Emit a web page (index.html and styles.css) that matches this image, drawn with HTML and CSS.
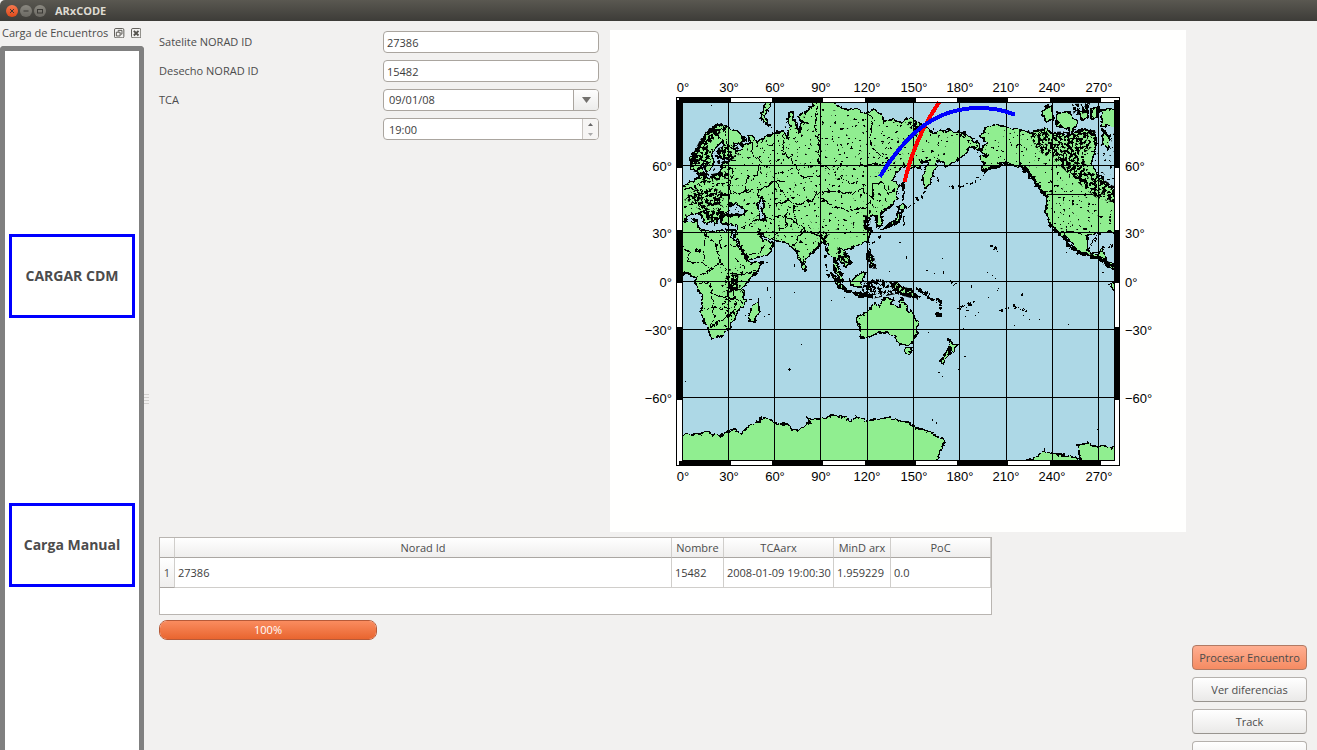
FILE: index.html
```html
<!DOCTYPE html>
<html lang="es">
<head>
<meta charset="utf-8">
<title>ARxCODE</title>
<link rel="stylesheet" href="styles.css">
</head>
<body>
<div class="window">
  <header class="titlebar">
    <button class="wm wm-close" aria-label="Cerrar"><svg viewBox="0 0 12 12"><path d="M4 4l4 4M8 4l-4 4"/></svg></button>
    <button class="wm" aria-label="Minimizar"><svg viewBox="0 0 12 12"><path d="M3.5 6h5"/></svg></button>
    <button class="wm" aria-label="Maximizar"><svg viewBox="0 0 12 12"><rect x="3.5" y="4.5" width="5" height="3.5"/></svg></button>
    <h1 class="title">ARxCODE</h1>
  </header>
  <div class="body">
    <aside class="dock">
      <div class="dock-head">
        <span class="dock-title">Carga de Encuentros</span>
        <button class="dock-btn" aria-label="Desacoplar"><svg viewBox="0 0 11 11"><rect x=".5" y=".5" width="10" height="10" rx="1.5"/><path d="M4.500 4V2.500h4v4H7M2.500 4.500h4v4h-4z"/></svg></button>
        <button class="dock-btn" aria-label="Cerrar panel"><svg viewBox="0 0 11 11"><rect x=".5" y=".5" width="10" height="10" rx="1.500"/><path class="thick" d="M3 3l5 5M8 3l-5 5"/></svg></button>
      </div>
      <div class="dock-frame">
        <button class="load">CARGAR CDM</button>
        <button class="load">Carga Manual</button>
      </div>
    </aside>
    <div class="splitter"><svg viewBox="0 0 5 10"><path d="M0 .5h5M0 3.500h5M0 6.500h5M0 9.500h5"/></svg></div>
    <main class="content">
      <form class="form">
        <label for="sat">Satelite NORAD ID</label>
        <input class="field" id="sat" type="text" value="27386">
        <label for="deb">Desecho NORAD ID</label>
        <input class="field" id="deb" type="text" value="15482">
        <label for="tca">TCA</label>
        <div class="combo field">
          <select id="tca"><option>09/01/08</option></select>
          <span class="combo-arrow"><svg viewBox="0 0 9 6"><path d="M0 0h9L4.500 6z"/></svg></span>
        </div>
        <div class="spin field">
          <input type="text" value="19:00" aria-label="Hora TCA">
          <span class="spin-buttons">
            <button type="button" aria-label="Subir"><svg viewBox="0 0 5 3"><path d="M0 3h5L2.500 0z"/></svg></button>
            <button type="button" class="down" aria-label="Bajar"><svg viewBox="0 0 5 3"><path d="M0 0h5L2.500 3z"/></svg></button>
          </span>
        </div>
      </form>

      <svg class="map" viewBox="610 30 576 502" role="img" aria-label="Mapa de trayectorias">
        <defs>
          <clipPath id="sea"><rect x="682" y="102" width="433" height="359"/></clipPath>
          <filter id="rough" filterUnits="userSpaceOnUse" x="676" y="96" width="446" height="372" color-interpolation-filters="sRGB">
            <feTurbulence type="fractalNoise" baseFrequency=".2" numOctaves="2" seed="4" result="n"/>
            <feDisplacementMap in="SourceGraphic" in2="n" scale="6" xChannelSelector="R" yChannelSelector="G"/>
          </filter>
          <filter id="dense" filterUnits="userSpaceOnUse" x="682" y="102" width="433" height="359" color-interpolation-filters="sRGB">
            <feTurbulence type="fractalNoise" baseFrequency=".34" numOctaves="3" seed="9"/>
            <feColorMatrix values="0 0 0 0 0 0 0 0 0 0 0 0 0 0 0 0 0 0 40 -19.500"/>
            <feComposite in2="SourceGraphic" operator="in"/>
          </filter>
          <filter id="sparse" filterUnits="userSpaceOnUse" x="682" y="102" width="433" height="359" color-interpolation-filters="sRGB">
            <feTurbulence type="fractalNoise" baseFrequency=".32" numOctaves="2" seed="2"/>
            <feColorMatrix values="0 0 0 0 0 0 0 0 0 0 0 0 0 0 0 0 0 0 40 -27.500"/>
            <feComposite in2="SourceGraphic" operator="in"/>
          </filter>
        </defs>
        <rect class="paper" x="610" y="30" width="576" height="502"/>
        <rect class="ocean" x="682" y="102" width="433" height="359"/>
        <g clip-path="url(#sea)">
          <g class="land" filter="url(#rough)">
            <!-- Eurasia -->
            <path d="M670 186L684 186L690 182L699 178L697 170L702 168L704 178L711 177L719 174L722 169L722 163L734 161L732 158L722 159L718 152L724 145L722 141L715 148L712 157L714 162L710 171L706 172L703 164L696 171L691 168L690 158L696 150L702 143L705 133L713 127L720 124L727 127L740 133L745 140L741 144L734 143L736 150L741 151L744 144L750 143L748 136L753 136L754 141L765 138L773 133L783 131L788 137L789 123L786 118L792 112L795 122L799 132L802 122L798 116L807 112L813 104L816 98L830 98L836 105L847 110L855 108L867 113L874 109L881 113L883 123L892 119L900 122L910 118L923 125L933 132L950 130L963 133L972 139L980 145L978 150L969 147L967 153L957 160L947 166L937 160L934 172L929 185L925 188L923 180L924 172L930 160L923 162L920 168L913 167L900 169L892 180L899 185L897 200L888 208L881 213L883 224L878 227L876 216L867 217L865 225L871 231L868 240L858 246L847 249L843 250L851 262L846 267L838 258L835 262L840 274L844 281L839 279L834 268L833 257L828 254L827 243L820 245L808 257L803 268L797 253L792 247L783 242L773 240L765 237L758 231L762 239L768 241L773 246L767 255L748 260L742 249L735 235L737 226L728 224L722 224L722 217L727 215L719 217L715 225L711 220L706 211L703 212L712 220L707 224L699 213L692 214L684 221L670 221Z"/>
            <path class="water" d="M727 215L730 205L735 204L746 211L743 215ZM758 204L762 197L765 202L762 208L766 220L759 218Z"/>
            <path d="M767 98L763 110L761 120L769 125L765 116L768 108L775 98Z"/>
            <!-- Africa -->
            <path d="M670 222L697 220L698 227L706 231L712 232L727 230L734 230L732 237L740 249L747 260L751 263L763 262L756 273L749 280L743 288L745 303L736 313L735 319L728 330L720 337L711 338L705 323L701 308L703 298L696 285L696 277L688 274L670 275Z"/>
            <path d="M758 300L759 310L754 321L750 322L749 313L753 306Z"/>
            <!-- Islands of Asia and Oceania -->
            <path d="M803 262L807 267L805 271L802 268ZM831 273L841 282L847 290L840 288L834 281ZM846 291L861 294L871 296L860 296ZM850 280L856 278L862 271L865 274L861 286L852 286ZM868 283L873 280L869 285L872 290L867 289ZM892 284L901 285L910 290L920 298L911 295L906 295L897 291ZM898 207L903 204L907 207L902 210ZM899 210L901 218L899 223L890 226L883 229L886 225L895 221ZM868 250L871 257L874 264L871 267L868 259ZM902 187L904 183L903 200Z"/>
            <path d="M857 317L867 312L875 303L880 306L883 299L893 299L892 304L899 308L902 298L907 308L915 317L918 325L917 332L912 343L907 345L900 344L895 337L888 333L878 333L870 337L861 338L860 327ZM905 348L911 348L909 355L906 354Z"/>
            <path d="M949 338L953 344L957 345L953 352L950 350ZM949 350L950 354L943 363L939 362Z"/>
            <!-- Americas -->
            <path d="M1020 165L1013 166L1005 163L993 168L982 171L984 164L980 157L987 156L980 150L987 143L981 136L986 128L993 125L1013 128L1020 130L1030 133L1045 129L1057 134L1070 135L1082 129L1093 132L1097 139L1095 150L1092 165L1098 175L1114 189L1122 196L1122 233L1110 231L1098 233L1088 235L1087 250L1098 255L1103 247L1104 254L1107 262L1114 264L1122 272L1114 270L1105 260L1092 257L1080 253L1072 243L1064 232L1066 240L1069 245L1060 235L1049 224L1046 210L1047 197L1037 186L1030 173Z"/>
            <path d="M1045 107L1052 105L1053 119L1047 121L1043 117ZM1057 112L1070 113L1077 122L1073 131L1057 125ZM1080 112L1087 108L1087 119L1081 120ZM1091 109L1098 107L1098 118L1091 118ZM1100 110L1122 109L1122 127L1102 126ZM1103 130L1109 136L1108 149L1103 145ZM1110 284L1122 280L1122 292L1114 291Z"/>
            <!-- Antarctica -->
            <path d="M670 435L700 434L707 432L720 436L728 431L735 429L742 433L747 427L760 420L767 417L775 423L788 425L797 432L803 427L810 423L807 418L820 419L832 415L843 417L850 421L857 417L867 421L890 417L900 421L907 422L913 427L927 431L945 441L940 452L934 468L670 468Z"/>
            <path d="M1023 462L1037 456L1045 450L1050 453L1065 455L1075 458L1080 460L1078 445L1088 443L1098 447L1122 448L1122 470L1023 470Z"/>
          </g>
          <!-- National borders -->
          <g class="borders" filter="url(#rough)">
            <path d="M697 228L720 247L720 231M720 247L728 245L743 246M682 248L689 252L704 249L706 231M689 252L688 262L703 263L704 249M703 263L710 270L720 262L717 247M710 270L697 277M720 262L728 272L737 274L746 274L757 270M737 274L736 282L728 283M697 284L710 282L712 294L727 298L728 283L744 292M702 308L713 308L712 296M713 308L720 307L728 298L735 299L735 309L728 317M713 308L713 320L710 327L718 322L729 315L728 307L719 309M735 257L740 263L746 269M733 283L733 296L743 303"/>
            <path d="M735 235L748 224L754 228M749 223L761 219L774 218L787 215L786 225L778 231L774 238M748 255L760 252L765 246M787 215L797 224L808 232L822 237L824 244L828 253M793 246L798 238L804 231M797 224L793 207L801 204M774 204L790 200L798 205L811 200L822 192L835 190L849 194L862 189L874 199L864 208L848 211L830 205L821 197M874 199L872 184L882 183L889 194L897 187M838 246L842 249L836 254L846 262M786 197L775 182L758 190L758 198M758 190L745 192L747 179L757 175L760 160L750 153L754 140"/>
            <path d="M684 190L694 188L701 193L696 203L684 207M694 188L699 181L712 182L728 184L731 194L745 192M701 193L717 194L720 204L708 205M717 194L731 194L727 204L739 203M722 166L734 168L731 184M696 203L706 208M817 102L815 125L820 150L817 162L830 170L845 166M867 113L873 120L870 145L878 154L890 160L880 164L867 165L855 166M783 131L784 152L794 164L800 178L820 175M840 177L850 184L858 182M775 182L785 181M902 213L905 225M703 145L714 132L722 141M721 125L727 137L728 158"/>
            <path d="M1062 232L1078 232L1088 238M1088 250L1100 233M1088 251L1103 251M1020 166L1044 194"/>
          </g>
          <path class="borders" d="M1047 194.500h46M1019.500 130v35"/>
          <!-- Lakes, rivers and fjords -->
          <g filter="url(#sparse)">
            <path d="M684 182L750 145L820 108L960 132L940 162L885 175L892 195L870 235L825 240L803 258L770 236L740 220L684 220ZM984 130L1114 132L1114 233L1066 232L1048 220L1046 190L1020 164L985 164ZM720 264L744 264L738 315L724 330Z"/>
          </g>
          <g filter="url(#dense)">
            <path d="M690 160L700 140L707 130L720 123L728 129L720 133L711 142L704 155L703 164L692 168ZM718 148L730 145L744 142L738 156L728 162L717 160ZM696 207L704 206L712 211L722 205L727 214L718 223L708 216ZM693 171L712 174L726 171L732 177L706 183ZM724 276L738 274L740 290L728 293ZM1052 132L1095 130L1097 143L1083 154L1088 170L1114 186L1114 203L1095 197L1075 180L1056 162L1048 146ZM1072 104L1090 103L1088 112L1074 116ZM817 228L827 233L828 246L818 244ZM863 215L871 216L869 233L864 232ZM864 283L880 279L895 283L918 292L918 300L896 294L871 299L861 293ZM868 252L874 256L877 269L869 268ZM835 246L848 254L850 264L839 261ZM1029 133L1044 128L1054 142L1047 158L1036 148ZM700 149L713 149L710 165L702 169ZM1089 253L1114 264L1114 270L1095 260ZM905 122L918 121L925 134L912 130ZM714 154L724 150L728 164L718 164ZM684 200L692 190L715 188L725 194L722 204L705 207Z"/>
          </g>
          <g class="fjords" filter="url(#rough)">
            <path d="M692 165L696 152L704 139L709 131L719 126M1022 167L1035 181L1046 197M1064 235L1069 246L1082 254L1098 258L1114 269M834 258L842 275M834 277L846 291M846 291L870 296M885 228L898 222L902 210M991 168L1008 162M917 288L928 296L934 301M938 298L942 310M935 314L942 315"/>
          </g>
          <g class="chain" filter="url(#rough)">
            <path d="M986 171Q974 187 948 187M924 192Q916 203 902 211M872 244L882 235M916 288L932 297M825 255L829 277M866 282L884 280M960 308L974 302M1014 305L1028 312M1000 311L1010 308M951 280L954 285M990 246L998 251M1020 294L1024 297M939 182L936 175M868 239L870 250M1108 247L1114 245M960 134L976 147M983 148L978 153M995 247L999 252"/>
          </g>
          <path class="dots" d="M711 105h1M889 271h1M906 259v-3M899 242h2M926 270h2M942 258h1M934 273h1M943 271v3M955 283h2M957 308h3M966 310h3M971 285v3M973 301h2M965 316h1M978 312h1M987 272h1M992 275h1M995 278h1M998 288h1M997 290h1M988 297h1M1013 304v3M1014 308h2M1020 309h1M1023 315h1M1029 319h1M1039 319h1M1068 324h1M1014 325h1M975 315h1M1066 252h1M1102 272h2M766 262h2M794 264v3M794 292h1M767 287v4M770 297h1M768 314h2M764 316h1M801 344h1M685 381h1M788 369h3M789 368v3M745 315h1M749 299h3M831 300h1M844 297h1M928 332h1M963 328h1M958 369h1M964 356h2M938 372h2M942 376h1M932 419v2M936 422v2M1097 429h2M826 417h1"/>
        </g>
        <g class="grid">
          <path d="M728.500 102v359M774.500 102v359M820.500 102v359M867.500 102v359M913.500 102v359M959.500 102v359M1006.500 102v359M1052.500 102v359M1098.500 102v359M682 165.500h433M682 232.500h433M682 281.500h433M682 329.500h433M682 397.500h433"/>
        </g>
        <path class="dots" d="M1096 281.500h5M1098.500 280v4"/>
        <g class="track">
          <path class="debris" d="M938 104Q915 138 905 180"/>
          <path class="satellite" d="M881 175C904 138 932 108 979 108Q998 108 1013 114"/>
        </g>
        <g class="frame">
          <path class="rim" d="M676.500 97.500h443v368h-443zM682.500 102.500h432v358h-432z"/>
          <path d="M679 97h52v5h-52zM772 97h51v5h-51zM865 97h51v5h-51zM957 97h51v5h-51zM1050 97h51v5h-51zM679 461h52v5h-52zM772 461h51v5h-51zM865 461h51v5h-51zM957 461h51v5h-51zM1050 461h51v5h-51zM676 100h6v68h-6zM676 230h6v53h-6zM676 327h6v73h-6zM1114 100h6v68h-6zM1114 230h6v53h-6zM1114 327h6v73h-6z"/>
        </g>
        <g class="lon">
          <text x="683" y="92">0°</text><text x="729" y="92">30°</text><text x="775" y="92">60°</text><text x="821" y="92">90°</text><text x="867" y="92">120°</text><text x="914" y="92">150°</text><text x="960" y="92">180°</text><text x="1006" y="92">210°</text><text x="1052" y="92">240°</text><text x="1099" y="92">270°</text>
          <text x="683" y="481">0°</text><text x="729" y="481">30°</text><text x="775" y="481">60°</text><text x="821" y="481">90°</text><text x="867" y="481">120°</text><text x="914" y="481">150°</text><text x="960" y="481">180°</text><text x="1006" y="481">210°</text><text x="1052" y="481">240°</text><text x="1099" y="481">270°</text>
        </g>
        <g class="lat-left">
          <text x="672" y="171">60°</text><text x="672" y="238">30°</text><text x="672" y="287">0°</text><text x="672" y="335">−30°</text><text x="672" y="403">−60°</text>
        </g>
        <g class="lat-right">
          <text x="1125" y="171">60°</text><text x="1125" y="238">30°</text><text x="1125" y="287">0°</text><text x="1125" y="335">−30°</text><text x="1125" y="403">−60°</text>
        </g>
      </svg>

      <div class="results">
        <table>
          <colgroup><col class="c-num"><col><col class="c-name"><col class="c-tca"><col class="c-dist"><col class="c-poc"></colgroup>
          <thead><tr><th></th><th>Norad Id</th><th>Nombre</th><th>TCAarx</th><th>MinD arx</th><th>PoC</th></tr></thead>
          <tbody><tr><th>1</th><td>27386</td><td>15482</td><td>2008-01-09 19:00:30</td><td>1.959229</td><td>0.0</td></tr></tbody>
        </table>
      </div>

      <div class="progress">
        <progress id="prog" max="100" value="100"></progress>
        <label for="prog">100%</label>
      </div>

      <div class="actions">
        <button class="btn btn-primary">Procesar Encuentro</button>
        <button class="btn">Ver diferencias</button>
        <button class="btn">Track</button>
        <button class="btn">Salir</button>
      </div>
    </main>
  </div>
</div>
</body>
</html>
```

FILE: styles.css
```css
* { box-sizing: border-box; }

body {
  margin: 0;
  background: #f2f1f0;
  color: #4c4c4c;
  font: 11px/16px "Open Sans", "Noto Sans", sans-serif;
}

button, input, select { font: inherit; color: inherit; margin: 0; }
svg { display: block; }

.window {
  display: flex;
  flex-direction: column;
  height: 100vh;
  overflow: hidden;
}

.titlebar {
  display: flex;
  flex: none;
  align-items: center;
  gap: 2px;
  height: 21px;
  padding: 1px 6px 0;
  background: linear-gradient(#5a5851, #3d3c38);
  border-radius: 5px 0 0;
}

.wm {
  width: 12px;
  height: 12px;
  padding: 0;
  border: 0;
  border-radius: 50%;
  background: linear-gradient(#8a8880, #6b6963);
}
.wm-close { background: linear-gradient(#f6794f, #dd4a1b); }
.wm svg { fill: none; stroke: #3a3935; stroke-width: 1; }

.title {
  margin: 0 0 0 7px;
  color: #dfdbd2;
  font-size: 11px;
  line-height: 16px;
  font-weight: 700;
}

.body { display: flex; flex: 1; min-height: 0; }

.dock { display: flex; flex: none; flex-direction: column; width: 144px; }
.dock-head {
  display: flex;
  align-items: center;
  flex: none;
  gap: 6px;
  height: 25px;
  padding: 0 3px 1px 2px;
}
.dock-title { flex: 1; white-space: nowrap; }
.dock-btn { width: 11px; height: 11px; padding: 0; border: 0; background: none; }
.dock-btn svg { fill: none; stroke: #55534e; }
.dock-btn .thick { stroke-width: 2; }

.dock-frame {
  display: flex;
  flex: 1;
  flex-direction: column;
  gap: 185px;
  padding: 183px 4px 0;
  border: 5px solid #808080;
  border-bottom: 0;
  border-radius: 4px 4px 0 0;
  background: #fff;
}
.load {
  flex: none;
  height: 84px;
  padding: 0;
  border: 3px solid #00f;
  background: #fff;
  font-size: 14px;
  font-weight: 700;
}

.splitter { display: flex; flex: none; align-items: center; width: 15px; }
.splitter svg { width: 5px; height: 10px; stroke: #d2d0ce; margin: 26px 0 0; }

.content {
  display: grid;
  flex: 1;
  grid-template-columns: 440px minmax(0, 1fr) 115px;
  grid-template-rows: max-content 78px 20px max-content;
  align-content: start;
  align-self: flex-start;
  row-gap: 5px;
  padding: 9px 10px 0 0;
}

.form {
  display: grid;
  grid-template-columns: 224px 216px;
  grid-auto-rows: 22px;
  align-items: center;
  align-content: start;
  row-gap: 7px;
  padding-top: 1px;
}

.field {
  width: 100%;
  height: 22px;
  padding: 0 3px;
  border: 1px solid #aaa59f;
  border-radius: 4px;
  background: #fff;
  color: #3c3c3c;
}
.combo, .spin { display: flex; padding: 0; overflow: hidden; }
.spin { grid-column: 2; }
.combo select, .spin input {
  flex: 1;
  min-width: 0;
  height: 20px;
  padding: 0 5px;
  border: 0;
  background: none;
  appearance: none;
}
.combo-arrow {
  display: flex;
  align-items: center;
  justify-content: center;
  width: 25px;
  border-left: 1px solid #aaa59f;
  background: linear-gradient(#fefefe, #ececeb);
  pointer-events: none;
}
.combo-arrow svg { width: 9px; height: 6px; fill: #72706d; }
.spin-buttons {
  display: flex;
  flex-direction: column;
  width: 16px;
  border-left: 1px solid #c9c5c1;
  background: #f6f5f4;
}
.spin-buttons button {
  display: flex;
  flex: 1;
  align-items: center;
  justify-content: center;
  padding: 0;
  border: 0;
  background: none;
}
.spin-buttons svg { width: 5px; height: 3px; fill: #666; }
.spin-buttons .down svg { fill: #aaa; }

.map { width: calc(100% - 17px); margin-left: 11px; height: auto; }
.paper { fill: #fffffe; }
.ocean { fill: #add8e6; }
.land { fill: #90ee90; stroke: #000; stroke-width: 1.6; shape-rendering: crispEdges; }
.land .water { fill: #add8e6; }
.borders, .fjords, .chain, .dots, .grid, .rim { fill: none; stroke: #000; shape-rendering: crispEdges; }
.fjords { stroke-width: 3; stroke-dasharray: 8 1 3 1; }
.chain { stroke-width: 2; stroke-dasharray: 3 2 1 3; }
.dots { stroke-width: 1; }
.track { fill: none; stroke-width: 4; stroke-linecap: square; shape-rendering: crispEdges; }
.debris { stroke: #f00; }
.satellite { stroke: #00f; }
.frame { fill: #000; shape-rendering: crispEdges; }
.frame .rim { fill: none; }
.lon, .lat-left, .lat-right { fill: #000; font: 13px "Liberation Sans", Arial, sans-serif; }
.lon { text-anchor: middle; }
.lat-left { text-anchor: end; }

.results {
  grid-column: 1 / 3;
  margin-right: 200px;
  border: 1px solid #b9b5b1;
  background: #fff;
}
table { width: 100%; border-collapse: separate; border-spacing: 0; table-layout: fixed; }
.c-num { width: 15px; }
.c-name { width: 52px; }
.c-tca { width: 110px; }
.c-dist { width: 57px; }
.c-poc { width: 100px; }
th, td { padding: 0; border-right: 1px solid #d0cecb; white-space: nowrap; }
th { background: linear-gradient(#fff, #efeeed); font-weight: 400; text-align: center; }
thead th { height: 20px; border-bottom: 1px solid #aaa6a2; }
tbody th { border-bottom: 1px solid #aaa6a2; }
td { height: 30px; padding-left: 3px; border-bottom: 1px solid #d0cecb; color: #3c3c3c; }

.progress { display: grid; grid-column: 1; width: 218px; }
.progress progress, .progress label { grid-area: 1 / 1; }
.progress progress {
  width: 100%;
  height: 20px;
  border: 1px solid #b75a38;
  border-radius: 8px;
  overflow: hidden;
  appearance: none;
}
progress::-webkit-progress-bar { background: #fff; }
progress::-webkit-progress-value { background: linear-gradient(#fa8c5f, #e9652f); }
.progress label { z-index: 1; color: #fff; line-height: 20px; text-align: center; }

.actions { display: flex; grid-column: 3; grid-row: 4; flex-direction: column; gap: 7px; }
.btn {
  flex: none;
  height: 25px;
  padding: 0;
  border: 1px solid #b5b1ad;
  border-bottom-color: #98948f;
  border-radius: 4px;
  background: linear-gradient(#fff, #eae9e8);
  white-space: nowrap;
}
.btn-primary { border-color: #b07a64; background: linear-gradient(#ffae91, #f58b62); }
```
